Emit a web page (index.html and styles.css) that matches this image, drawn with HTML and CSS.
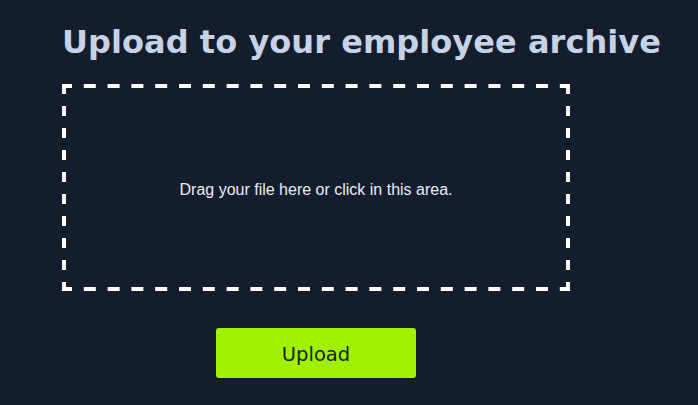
FILE: index.html
```html
<!DOCTYPE html>
<html>
<head>
<meta charset="utf-8">
<link rel="stylesheet" href="styles.css">
</head>
<body>
<main class="page">
  <h1 class="title">Upload to your employee archive</h1>
  <div class="dropzone">
    <svg class="dash-frame" width="508" height="207" viewBox="0 0 508 207" aria-hidden="true">
      <line class="edge-h" x1="0" y1="2" x2="508" y2="2"/>
      <line class="edge-h" x1="0" y1="205" x2="508" y2="205"/>
      <line class="edge-v" x1="2" y1="0" x2="2" y2="207"/>
      <line class="edge-v" x1="506" y1="0" x2="506" y2="207"/>
    </svg>
    <p class="hint">Drag your file here or click in this area.</p>
  </div>
  <div class="actions">
    <button class="upload-btn" type="button">Upload</button>
  </div>
</main>
</body>
</html>
```
FILE: styles.css
```css
html, body {
  margin: 0;
  padding: 0;
  background: #141d2c;
  height: 100%;
}
.page {
  padding: 24px 0 0 62px;
  box-sizing: border-box;
}
.title {
  margin: 0;
  font-family: "DejaVu Sans", sans-serif;
  font-weight: bold;
  font-size: 32px;
  line-height: 37px;
  letter-spacing: 0.05px;
  color: #c7d2e6;
  white-space: nowrap;
}
.dropzone {
  position: relative;
  margin-top: 23px;
  width: 508px;
  height: 207px;
  display: flex;
  align-items: center;
  justify-content: center;
}
.dash-frame {
  position: absolute;
  left: 0;
  top: 0;
}
.dash-frame line {
  stroke: #ffffff;
  stroke-width: 4;
  stroke-linecap: butt;
}
.dash-frame .edge-h {
  stroke-dasharray: 12 11.8;
  stroke-dashoffset: 2;
}
.dash-frame .edge-v {
  stroke-dasharray: 10 12;
  stroke-dashoffset: 0;
}
.hint {
  margin: 0;
  font-family: "Liberation Sans", Arial, sans-serif;
  font-size: 16px;
  color: #e6edf7;
  padding-top: 5px;
}
.actions {
  width: 508px;
  display: flex;
  justify-content: center;
  margin-top: 37px;
}
.upload-btn {
  width: 200px;
  height: 50px;
  border: none;
  border-radius: 3px;
  background: #a0f000;
  color: #1b2330;
  font-family: "DejaVu Sans", sans-serif;
  font-size: 19.5px;
  padding: 2px 0 0 0;
  cursor: pointer;
}
```
